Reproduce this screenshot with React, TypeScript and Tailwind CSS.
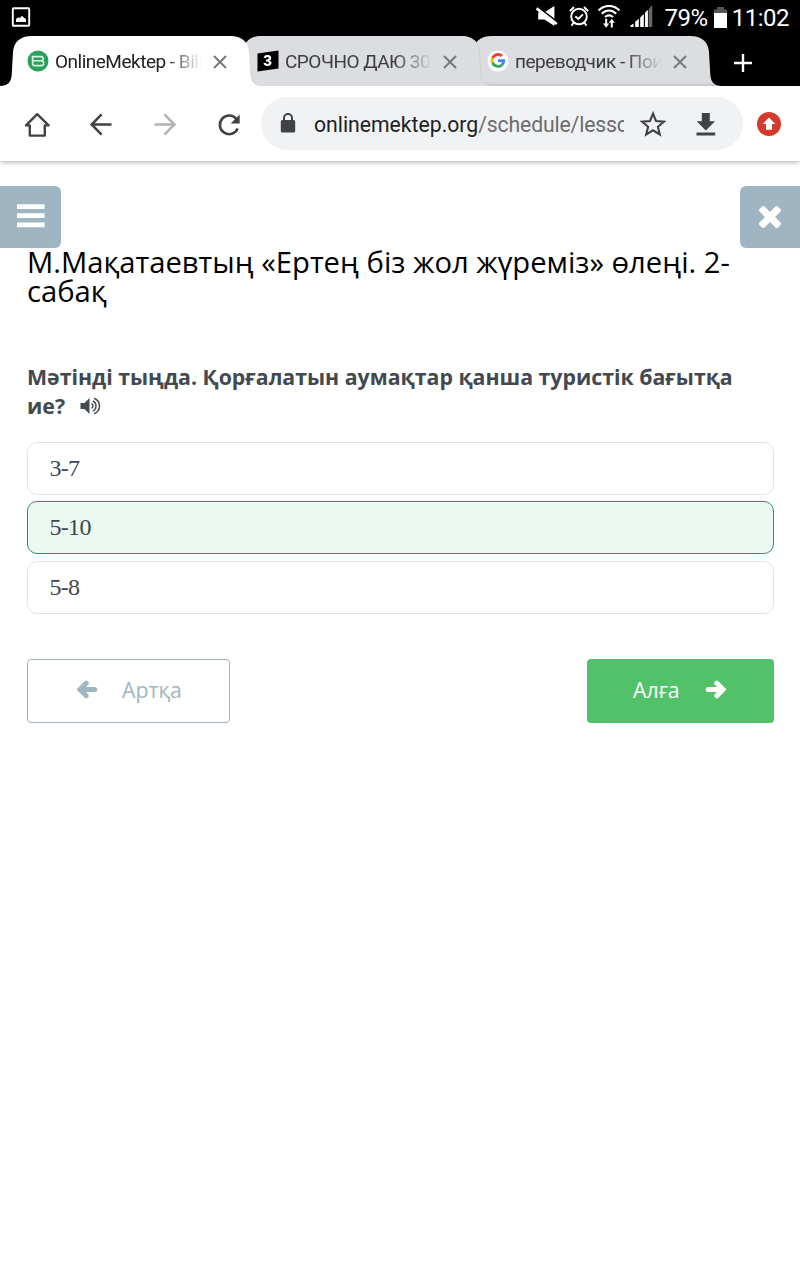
import type { ReactNode } from 'react';
import clsx from 'clsx';

type Tab = {
  title: string;
  icon: ReactNode;
  active?: boolean;
};

const answers = [
  { label: '3-7', selected: false },
  { label: '5-10', selected: true },
  { label: '5-8', selected: false },
];

function MektepIcon() {
  return (
    <svg className="w-[22px] h-[22px]" viewBox="0 0 22 22" fill="none">
      <circle cx="11" cy="11" r="10.5" fill="#2ba25a" />
      <path d="M4.6 6.6h9.6c2.6 0 2.6 4.2 0 4.2H5.6M14.2 10.8c3.2 0 3.2 4.8 0 4.8H7.4c-1.4 0-1.8-.8-1.8-2V6.6" stroke="#d9f5e3" strokeWidth="1.6" />
    </svg>
  );
}

function ZnanijaIcon() {
  return (
    <div className="relative w-[22px] h-[22px]">
      <svg className="w-[22px] h-[22px]" viewBox="0 0 22 22">
        <path d="M0.5 3.5 21.5 0.5v18L0.5 21.5z" fill="#000" />
      </svg>
      <span className="absolute inset-0 text-center text-[15px] leading-[22px] font-black text-white">3</span>
    </div>
  );
}

function GoogleIcon() {
  return (
    <svg className="w-[22px] h-[22px]" viewBox="0 0 22 22">
      <circle cx="11" cy="11" r="10.5" fill="#fff" />
      <g transform="translate(3.6 3) scale(.309)">
        <path fill="#EA4335" d="M24 9.5c3.54 0 6.71 1.22 9.21 3.6l6.85-6.85C35.9 2.38 30.47 0 24 0 14.62 0 6.51 5.38 2.56 13.22l7.98 6.19C12.43 13.72 17.74 9.5 24 9.5z" />
        <path fill="#4285F4" d="M46.98 24.55c0-1.57-.15-3.09-.38-4.55H24v9.02h12.94c-.58 2.96-2.26 5.48-4.78 7.18l7.73 6c4.51-4.18 7.09-10.36 7.09-17.65z" />
        <path fill="#FBBC05" d="M10.53 28.59c-.48-1.45-.76-2.99-.76-4.59s.27-3.14.76-4.59l-7.98-6.19C.92 16.46 0 20.12 0 24c0 3.88.92 7.54 2.56 10.78l7.97-6.19z" />
        <path fill="#34A853" d="M24 48c6.48 0 11.93-2.13 15.89-5.81l-7.73-6c-2.15 1.45-4.92 2.3-8.16 2.3-6.26 0-11.57-4.22-13.47-9.91l-7.98 6.19C6.51 42.62 14.62 48 24 48z" />
      </g>
    </svg>
  );
}

const tabs: Tab[] = [
  { title: 'OnlineMektep - Bilim', icon: <MektepIcon />, active: true },
  { title: 'СРОЧНО ДАЮ 30', icon: <ZnanijaIcon /> },
  { title: 'переводчик - Поиск', icon: <GoogleIcon /> },
];

function StatusBar() {
  return (
    <div className="h-9 bg-black flex items-center text-white">
      <svg className="w-5 h-5 ml-[11px] -mt-0.5" viewBox="0 0 20 20" fill="none">
        <rect x="1.8" y="1.3" width="16.4" height="17.4" rx=".8" stroke="#fff" strokeWidth="1.9" />
        <path d="M5 15v-3l2-1.6 2 .6 2-2.2 2 2 2 1.2v3z" fill="#fff" />
      </svg>
      <div className="ml-auto flex items-center pr-[11px]">
        <svg className="w-6 h-6 -mt-1.5" viewBox="0 0 24 24">
          <path d="M3.2 9.3h6.3L19.4 3v20L9.5 16.5H3.2z" fill="#fff" />
          <path d="M2.5 3.6 23 19.5" stroke="#000" strokeWidth="1.8" />
          <path d="M1.6 5.4 21.8 21" stroke="#fff" strokeWidth="2.6" />
        </svg>
        <svg className="w-6 h-6 ml-2 -mt-1" viewBox="0 0 24 24" fill="none" stroke="#fff" strokeWidth="1.9">
          <circle cx="12" cy="12.5" r="7.8" />
          <path d="M8.3 12.3l3 2.6 4.6-4.5M2.8 7.2 7 3M21.2 7.2 17 3M6.8 18.5 4.5 21.6M17.2 18.5l2.3 3.1" />
        </svg>
        <svg className="w-6 h-6 ml-1.5 -mt-0.5" viewBox="0 0 24 24" fill="none" stroke="#fff" strokeWidth="2.2">
          <path d="M1.6 5.4C8-.6 16-.6 22.4 5.4M4.8 8.7c4.4-4.2 10-4.2 14.4 0M8 12c2.6-2.2 5.4-2.2 8 0" />
          <path d="M9.2 13.8v6.5M14.8 22.4v-6.2" strokeWidth="2" />
          <path d="M6 18.6h6.2L9.2 22.8zM11.8 17.8h6L14.8 13.8z" fill="#fff" stroke="none" />
        </svg>
        <svg className="w-[23px] h-6 ml-[9px] -mt-0.5" viewBox="0 0 23 24">
          <path d="M0.5 22v-1.6l3-1.8V22z" fill="#fff" />
          <path d="M5.2 22v-5.2l3.6-3.1V22zM10.2 22v-9.5L13.8 9v13zM15.1 22V7.5L17.9 5v17z" fill="#fff" />
          <path d="M18.6 22V4L22.3 0v22z" fill="#666" />
        </svg>
        <span className="ml-[11px] text-[24px] leading-9 tracking-[-0.4px]">79%</span>
        <svg className="w-[13px] h-[21px] ml-1.5 -mt-0.5" viewBox="0 0 13 21">
          <path d="M3 0h7v2.6h3V6H0V2.6h3z" fill="#555" />
          <path d="M0 6h13v15H0z" fill="#fff" />
        </svg>
        <span className="ml-[5px] text-[24px] leading-9 tracking-[-0.5px]">11:02</span>
      </div>
    </div>
  );
}

function TabEdge({ flip }: { flip?: boolean }) {
  return (
    <svg className={clsx('w-8 h-[50px] shrink-0', flip && '-scale-x-100')} viewBox="0 0 32 50">
      <path d="M0 50c8 0 11-4 11.7-11L13 16C13.7 6 20 0 32 0v50z" fill="currentColor" />
    </svg>
  );
}

function TabItem({ tab, index }: { tab: Tab; index: number }) {
  return (
    <div
      className={clsx(
        'relative w-[262px] h-[50px] flex shrink-0',
        index > 0 && '-ml-8',
        tab.active ? 'z-20 text-white' : 'text-[#dcdde1]',
        index === 1 && 'z-10 drop-shadow-[1px_0_0_#cfd0d4]'
      )}
    >
      <TabEdge />
      <div className="grow h-full bg-current" />
      <TabEdge flip />
      <div className="absolute inset-0 flex items-center pl-[26.5px]">
        {tab.icon}
        <div
          className={clsx(
            'w-[147px] ml-[6.5px] overflow-hidden whitespace-nowrap text-[19px] leading-[50px] pt-0.5 tracking-[-0.5px] [mask-image:linear-gradient(to_right,#000_75%,transparent)]',
            tab.active ? 'text-[#202124]' : 'text-[#3c3d41]'
          )}
        >
          {tab.title}
        </div>
        <svg className="w-[14px] h-[14px] ml-[10.5px] mt-px text-[#77787b]" viewBox="0 0 14 14" stroke="currentColor" strokeWidth="2">
          <path d="M1 1l12 12M13 1L1 13" />
        </svg>
      </div>
    </div>
  );
}

function TabStrip() {
  return (
    <div className="h-[50px] bg-black flex">
      {tabs.map((tab, index) => (
        <TabItem key={tab.title} tab={tab} index={index} />
      ))}
      <svg className="w-5 h-5 mt-[17px] ml-[11px]" viewBox="0 0 20 20" stroke="#fff" strokeWidth="2.4">
        <path d="M10 1v18M1 10h18" />
      </svg>
    </div>
  );
}

function Toolbar() {
  return (
    <div className="relative h-[75px] bg-white flex items-center shadow-[0_1px_5px_rgba(0,0,0,0.35)]">
      <svg className="w-[26px] h-[26px] ml-6 mt-0.5" viewBox="0 0 26 26" fill="none" stroke="#414246" strokeWidth="2.4" strokeLinejoin="round">
        <path d="M2 13.4 13.2 2.2 24.6 13.4h-3.8v10.2H5.8V13.4z" />
      </svg>
      <svg className="w-6 h-6 ml-[39px]" viewBox="0 0 24 24" fill="none" stroke="#414246" strokeWidth="2.5">
        <path d="M22.5 12.5H3M12.6 2.3 2.6 12.5l10 10.2" />
      </svg>
      <svg className="w-6 h-6 ml-10" viewBox="0 0 24 24" fill="none" stroke="#b2b3b5" strokeWidth="2.5">
        <path d="M1.5 12.5H21M11.4 2.3l10 10.2-10 10.2" />
      </svg>
      <svg className="w-6 h-6 ml-10 mt-0.5" viewBox="0 0 24 24" fill="none">
        <path d="M20.7 15.6A9.3 9.3 0 1 1 19.4 6" stroke="#414246" strokeWidth="2.6" />
        <path d="M22.7 1.5v9h-9z" fill="#414246" />
      </svg>
      <div className="ml-5 w-[482px] h-[53px] rounded-full bg-[#f1f2f4] flex items-center">
        <svg className="w-4 h-5 ml-[19px] -mt-0.5" viewBox="0 0 16 20">
          <rect x=".8" y="7" width="14.4" height="12.6" rx="1.6" fill="#414246" />
          <path d="M4 8V5a4 4 0 0 1 8 0v3" fill="none" stroke="#414246" strokeWidth="2" />
        </svg>
        <div className="ml-[18px] w-[310px] overflow-hidden whitespace-nowrap text-[21.2px] leading-[53px] pt-0.5 text-[#6b6c70]">
          <span className="text-[#202124]">onlinemektep.org</span>
          <span className="tracking-[-0.15px]">/schedule/lesson</span>
        </div>
        <svg className="w-[26px] h-[26px] ml-4" viewBox="0 0 26 26" fill="none" stroke="#414246" strokeWidth="2.1">
          <path d="M13 2.6 16 10l8 .6-6.1 5.2 1.9 7.7L13 19.3l-6.8 4.2 1.9-7.7L2 10.6l8-.6z" />
        </svg>
        <svg className="w-5 h-6 ml-[30px] mt-px" viewBox="0 0 20 24" fill="#414246">
          <path d="M5.8 1h8v8.3h5.2L9.8 18.4.6 9.3h5.2zM.5 20.6h18.7v2.8H.5z" />
        </svg>
      </div>
      <svg className="w-6 h-6 ml-[14px]" viewBox="0 0 24 24">
        <circle cx="12" cy="12" r="12" fill="#d33a2c" />
        <path d="M12 5.6 18.4 12H15v5.8H9V12H5.6z" fill="#fff" />
      </svg>
    </div>
  );
}

function ArrowLeft({ className }: { className?: string }) {
  return (
    <svg className={clsx('w-[22px] h-[19px]', className)} viewBox="0 0 22 19" fill="none" stroke="currentColor" strokeWidth="5" strokeLinecap="round">
      <path d="M18.8 9.5H6" />
      <path d="M10.2 3.2 4 9.5l6.2 6.3" strokeLinejoin="miter" />
    </svg>
  );
}

export default function App() {
  return (
    <div className="min-h-[1280px] bg-white font-[Roboto,sans-serif]">
      <StatusBar />
      <TabStrip />
      <Toolbar />

      <main className="pt-[25px] font-['Open_Sans','Noto_Sans',sans-serif]">
        <div className="flex justify-between">
          <button className="w-[61px] h-[62px] rounded-r-md bg-[#9fb5c1] flex items-center justify-center">
            <svg className="w-7 h-6 -mt-0.5" viewBox="0 0 28 24" fill="#fff">
              <path d="M0 .2h27.5v4.8H0zM0 9.3h27.5v4.8H0zM0 18.4h27.5v4.8H0z" />
            </svg>
          </button>
          <button className="w-[60px] h-[62px] rounded-l-md bg-[#9fb5c1] flex items-center justify-center">
            <svg className="w-[22px] h-[22px]" viewBox="302 302 1188 1188" fill="#fff">
              <path d="M1490 1322q0 40-28 68l-136 136q-28 28-68 28t-68-28l-294-294-294 294q-28 28-68 28t-68-28l-136-136q-28-28-28-68t28-68l294-294-294-294q-28-28-28-68t28-68l136-136q28-28 68-28t68 28l294 294 294-294q28-28 68-28t68 28l136 136q28 28 28 68t-28 68l-294 294 294 294q28 28 28 68z" transform="translate(0 -64)" />
            </svg>
          </button>
        </div>

        <div className="px-[27px]">
          <h1 className="text-[29.2px] leading-[29px] text-black whitespace-nowrap">
            М.Мақатаевтың «Ертең біз жол жүреміз» өлеңі. 2-
            <br />
            сабақ
          </h1>

          <div className="mt-14 text-[21.3px] leading-[29px] font-bold text-[#424950] whitespace-nowrap">
            Мәтінді тыңда. Қорғалатын аумақтар қанша туристік бағытқа
            <br />
            <span className="inline-flex items-center">
              ие?
              <svg className="w-[21px] h-[18px] ml-[15px]" viewBox="0 0 21 18" fill="none" stroke="#424950" strokeWidth="1.5">
                <path d="M.5 6h4l5-5v16l-5-5h-4z" fill="#424950" stroke="none" />
                <path d="M11.5 6.8c2 .8 2 3.6 0 4.4M12.8 4c4.2 1.6 4.2 8.4 0 10M14.2 1.2c7 3 7 12.6 0 15.6" />
              </svg>
            </span>
          </div>

          <div className="mt-[22px] mr-[-1px] flex flex-col gap-[6.6px]">
            {answers.map((answer) => (
              <div
                key={answer.label}
                className={clsx(
                  "h-[52.8px] rounded-[10px] border pl-[21.5px] text-[24px] leading-[51px] tracking-[-0.7px] text-[#3f464d] font-['Liberation_Serif',serif]",
                  answer.selected ? 'border-[#17977a] bg-[#ecf9f3]' : 'border-[#e2e3e5] bg-white'
                )}
              >
                {answer.label}
              </div>
            ))}
          </div>

          <div className="mt-[45px] mr-[-1px] flex justify-between text-[21.3px]">
            <button className="w-[203px] h-16 rounded border border-[#9fb1bd] text-[#9fb5c1] flex items-center pl-12">
              <ArrowLeft className="-mt-[3px]" />
              <span className="ml-6 -mt-px">Артқа</span>
            </button>
            <button className="w-[187px] h-16 rounded bg-[#51c26a] text-white flex items-center pl-[46px]">
              <span className="-mt-px">Алға</span>
              <ArrowLeft className="ml-[25px] -mt-[3px] rotate-180" />
            </button>
          </div>
        </div>
      </main>
    </div>
  );
}
